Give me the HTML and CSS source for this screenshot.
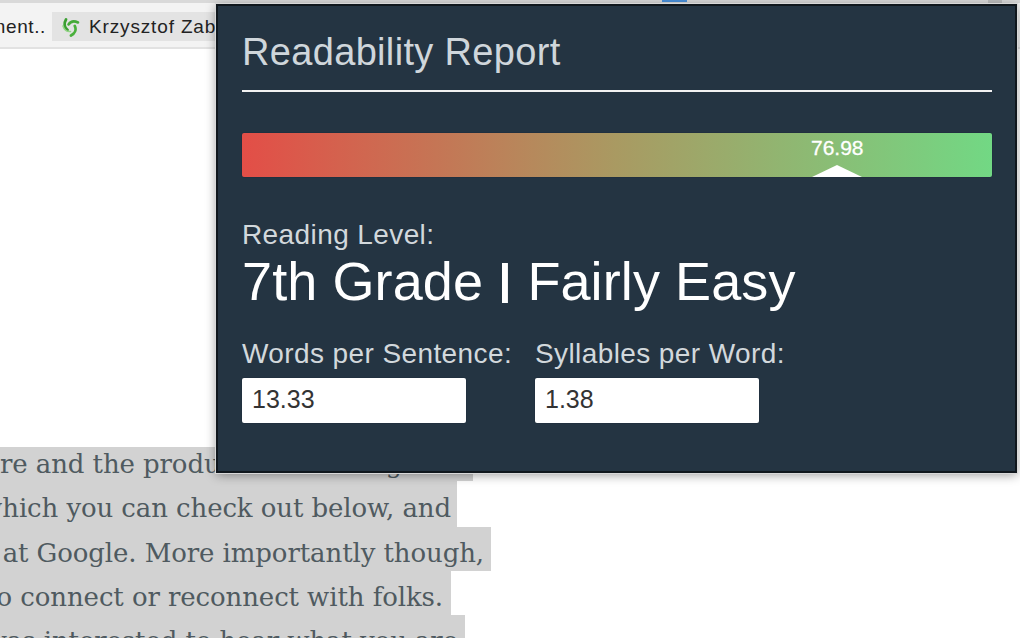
FILE: index.html
```html
<!DOCTYPE html>
<html lang="en">
<head>
<meta charset="utf-8">
<title>Readability Report</title>
<link rel="stylesheet" href="styles.css">
</head>
<body>
<header class="toolbar">
  <div class="tab-marks"><span class="mark-blue"></span><span class="mark-end"></span></div>
  <nav class="bookmarks">
    <span class="bookmark-cut"><span>ment..</span></span>
    <span class="bookmark">
      <svg class="favicon" viewBox="0 0 20 20" aria-hidden="true">
        <g fill="none" stroke-linecap="round">
          <path d="M6 2.5 C3.5 6.5 4.5 11 7.5 13" stroke="#3a9f31" stroke-width="2.8"/>
          <path d="M18 5.5 C14 3.5 10.5 4.5 8.5 7.5" stroke="#46aa39" stroke-width="2.6"/>
          <path d="M11 18.5 C15 16.5 16.5 12.5 14.8 9" stroke="#4ab03c" stroke-width="2.8"/>
          <path d="M3 9 C4 12.5 7 15 10.5 14.5" stroke="#93d486" stroke-width="1.6"/>
        </g>
      </svg>
      <span>Krzysztof Zab</span>
    </span>
  </nav>
</header>

<main class="article">
  <p class="line w1">re and the product set of things</p>
  <p class="line w2">which you can check out below, and</p>
  <p class="line w3">at Google. More importantly though,</p>
  <p class="line w4">to connect or reconnect with folks.</p>
  <p class="line w5">was interested to hear what you are</p>
</main>

<section class="report">
  <h1 class="report-title">Readability Report</h1>
  <div class="meter">
    <span class="score">76.98</span>
    <span class="pointer"></span>
  </div>
  <p class="level-label">Reading Level:</p>
  <p class="level-value">7th Grade <span class="divider">|</span> Fairly Easy</p>
  <div class="stats">
    <div class="stat stat-words">
      <label class="stat-label">Words per Sentence:</label>
      <div class="stat-box">13.33</div>
    </div>
    <div class="stat">
      <label class="stat-label">Syllables per Word:</label>
      <div class="stat-box">1.38</div>
    </div>
  </div>
</section>
</body>
</html>
```
FILE: styles.css
```css
* { box-sizing: border-box; }
html, body { margin: 0; padding: 0; }
body {
  width: 1020px;
  height: 638px;
  overflow: hidden;
  position: relative;
  background: #fff;
  font-family: "Liberation Sans", Arial, sans-serif;
}
.toolbar {
  height: 49px;
  background: #f3f3f3;
  border-top: 3px solid #d9d9d9;
  border-bottom: 2px solid #e2e2e2;
  position: relative;
  padding-top: 9px;
}
.tab-marks { position: absolute; top: -3px; left: 0; width: 100%; }
.mark-blue { position: absolute; left: 662px; top: 0; width: 25px; height: 2px; background: #4a90d9; }
.mark-end { position: absolute; left: 988px; top: 0; width: 14px; height: 3px; background: #bdbdbd; }
.bookmarks { display: flex; height: 29px; align-items: center; }
.bookmark-cut {
  width: 52px;
  flex: none;
  display: flex;
  justify-content: flex-end;
  font-size: 19px;
  letter-spacing: 0.6px;
  color: #222;
  white-space: nowrap;
  overflow: hidden;
  padding-right: 6px;
}
.bookmark {
  display: flex;
  align-items: center;
  height: 29px;
  padding-left: 8px;
  gap: 9px;
  width: 170px;
  background: #e3e3e3;
  font-size: 19px;
  letter-spacing: 0.85px;
  color: #222;
  white-space: nowrap;
  overflow: hidden;
}
.favicon { width: 20px; height: 20px; flex: none; }
.article { padding-top: 398px; display: flex; flex-direction: column; align-items: flex-start; }
.line {
  margin: 0;
  height: 44px;
  display: flex;
  justify-content: flex-end;
  line-height: 34px;
  padding: 9px 7px 0 0;
  font-family: "DejaVu Serif", "Liberation Serif", serif;
  font-size: 26px;
  letter-spacing: -0.1px;
  color: #4f5a60;
  white-space: nowrap;
  overflow: hidden;
  background: #d2d2d2;
}
.w1 { width: 473px; height: 34px; padding-top: 0; justify-content: flex-start; }
.w2 { width: 457px; height: 46px; padding: 10px 6px 0 0; }
.w3 { width: 491px; }
.w4 { width: 451px; padding-right: 8px; }
.w5 { width: 465px; height: 23px; }
.report {
  position: absolute;
  left: 216px;
  top: 4px;
  width: 801px;
  height: 469px;
  background: #243442;
  border: 2px solid #10171d;
  padding: 0 23px 0 24px;
  box-shadow: 0 2px 10px rgba(0,0,0,.4);
  outline: 1px solid #d8d8d8;
}
.report-title {
  margin: 0;
  height: 86px;
  padding-top: 26px;
  border-bottom: 2px solid #f2f2f2;
  font-size: 38px;
  letter-spacing: 0.33px;
  line-height: 41px;
  font-weight: 400;
  color: #cfd6db;
}
.meter {
  margin-top: 41px;
  height: 44px;
  border-radius: 2px;
  background: linear-gradient(90deg, #e34e47 0%, #a99a62 50%, #72d884 100%);
  box-shadow: 0 0 1px #0c1a2c;
  position: relative;
  text-align: center;
}
.score {
  position: absolute;
  left: 569px;
  top: 3px;
  font-size: 21px;
  line-height: 24px;
  -webkit-text-stroke: 0.3px #fff;
  color: #fff;
}
.pointer {
  position: absolute;
  left: 570px;
  bottom: 0;
  width: 0;
  height: 0;
  border-left: 25px solid transparent;
  border-right: 25px solid transparent;
  border-bottom: 12px solid #fff;
}
.level-label {
  margin: 42px 0 0;
  font-size: 28px;
  letter-spacing: 0.4px;
  line-height: 32px;
  color: #d2d8dc;
}
.level-value {
  margin: 0;
  font-size: 54px;
  letter-spacing: 0.1px;
  line-height: 60px;
  color: #fff;
}
.divider {
  display: inline-block;
  transform: translateY(-2px) scale(1.35, .8);
}
.stats { display: flex; margin-top: 27px; }
.stat-words { width: 293px; }
.stat-label {
  display: block;
  font-size: 28px;
  letter-spacing: 0.4px;
  line-height: 32px;
  color: #d2d8dc;
  white-space: nowrap;
}
.stat-box {
  margin-top: 8px;
  width: 224px;
  height: 45px;
  background: #fff;
  border-radius: 2px;
  box-shadow: 0 0 1px #0c1a2c;
  padding-left: 10px;
  font-size: 25px;
  line-height: 43px;
  color: #333;
}
```
